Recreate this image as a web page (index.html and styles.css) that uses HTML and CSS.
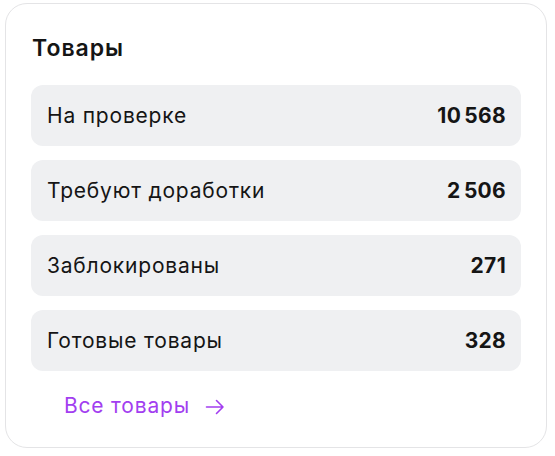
FILE: index.html
```html
<!DOCTYPE html>
<html lang="ru">
<head>
<meta charset="utf-8">
<link rel="stylesheet" href="styles.css">
</head>
<body>
<section class="card">
  <h2 class="title">Товары</h2>
  <ul class="list">
    <li class="row"><span class="label">На проверке</span><span class="value">10 568</span></li>
    <li class="row"><span class="label">Требуют доработки</span><span class="value">2 506</span></li>
    <li class="row"><span class="label">Заблокированы</span><span class="value">271</span></li>
    <li class="row"><span class="label">Готовые товары</span><span class="value">328</span></li>
  </ul>
  <a class="more" href="#">Все товары
    <svg class="arrow" width="20" height="16" viewBox="0 0 20 16" fill="none"><path d="M1.5 8H18M11.5 1.5L18 8L11.5 14.5" stroke="currentColor" stroke-width="1.6" stroke-linecap="round" stroke-linejoin="round"/></svg>
  </a>
</section>
</body>
</html>
```
FILE: styles.css
```css
* { box-sizing: border-box; }
body {
  margin: 0;
  background: #fff;
  font-family: Inter, "Noto Sans", sans-serif;
  color: #151515;
}
.card {
  margin: 3px 0 0 5px;
  width: 542px;
  border: 1px solid #e4e4e6;
  border-radius: 22px;
  padding: 30px 25px 29px 25px;
  display: flex;
  flex-direction: column;
}
.title {
  margin: 0 0 23px 1px;
  font-size: 23px;
  line-height: 28px;
  font-weight: 600;
  letter-spacing: 1px;
}
.list {
  list-style: none;
  margin: 0;
  padding: 0;
  display: flex;
  flex-direction: column;
  gap: 14px;
}
.row {
  height: 61px;
  background: #eff0f2;
  border-radius: 12px;
  padding: 0 15px 0 16px;
  display: flex;
  align-items: center;
  justify-content: space-between;
  font-size: 21px;
  letter-spacing: 0.8px;
}
.value {
  font-weight: 700;
  letter-spacing: 0.3px;
  word-spacing: -2px;
}
.more {
  margin: 23px 0 0 33px;
  display: flex;
  align-items: center;
  gap: 15px;
  color: #a23ef0;
  text-decoration: none;
  font-size: 21px;
  line-height: 24px;
  letter-spacing: 0.8px;
}
.arrow { display: block; margin-top: 1px; }
```
